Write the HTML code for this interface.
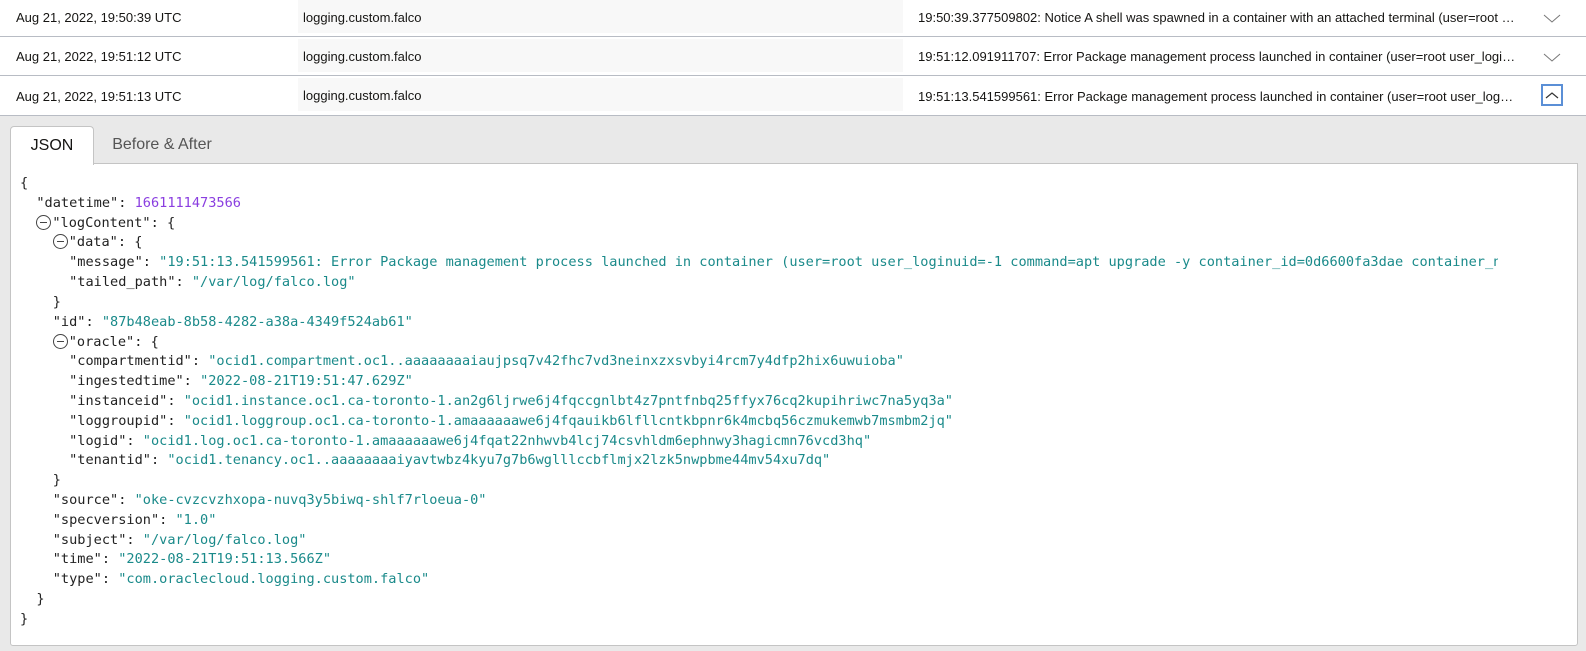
<!DOCTYPE html>
<html style="overflow:hidden;width:1586px;height:651px"><head><style>
html,body{margin:0;padding:0;overflow:hidden}
body{width:1586px;height:651px;position:relative;background:#fff;font-family:"Liberation Sans",sans-serif;font-size:13px;color:#161513;}
.row{position:absolute;left:0;width:1586px;border-bottom:1px solid #b8bcc4;}
.c1{position:absolute;left:16px;top:0;line-height:36px;}
.c2{position:absolute;left:298px;width:605px;top:0;height:33px;background:#f8f8f8;line-height:36px;}
.c2 span{padding-left:5px}
.c3{position:absolute;left:918px;width:598px;top:0;line-height:36px;white-space:nowrap;overflow:hidden;text-overflow:ellipsis;}
.chev{position:absolute;left:1543px;top:13px;width:18px;height:9px;}
.panel{position:absolute;top:116px;left:0;width:1586px;height:535px;background:#e9e9e9;overflow:hidden}
.tab{position:absolute;top:10px;height:38px;box-sizing:border-box;font-size:16px;line-height:38px;text-align:center;}
.t1{left:10px;width:84px;background:#fff;border:1px solid #c4c4c4;border-bottom:none;border-radius:4px 4px 0 0;color:#161513;z-index:2;height:39px}
.t2{left:94px;width:136px;color:#555;}
.box{position:absolute;left:10px;top:47px;width:1568px;height:483px;background:#fff;border:1px solid #c4c4c4;box-sizing:border-box;border-radius:0 0 3px 3px;overflow:hidden}
.code{position:absolute;left:9px;top:10px;width:1478px;overflow:hidden;font-family:"DejaVu Sans Mono","Liberation Mono",monospace;font-size:13.6px;color:#222;}
.code div{height:19.82px;line-height:19.82px;white-space:pre;overflow:hidden}
.s{color:#1a8a8a}.n{color:#8a3ee0}
.tg{display:inline-block;width:15px;height:15px;border:1px solid #444;border-radius:50%;box-sizing:border-box;vertical-align:-3px;position:relative;margin-right:1px}
.tg:after{content:"";position:absolute;left:3px;right:3px;top:6px;height:1px;background:#444}
</style></head><body>
<div class="row" style="top:0;height:36px"><div class="c1">Aug 21, 2022, 19:50:39 UTC</div><div class="c2"><span>logging.custom.falco</span></div><div class="c3">19:50:39.377509802: Notice A shell was spawned in a container with an attached terminal (user=root user_loginuid=0 k8s.ns=default)</div>
<svg class="chev" style="top:14px" viewBox="0 0 18 9"><path d="M1 1l8 7 8-7" fill="none" stroke="#777" stroke-width="1"/></svg></div>
<div class="row" style="top:37px;height:38px"><div class="c1" style="top:2px">Aug 21, 2022, 19:51:12 UTC</div><div class="c2" style="top:2px"><span>logging.custom.falco</span></div><div class="c3" style="top:2px">19:51:12.091911707: Error Package management process launched in container (user=root user_loginuid=-1 command=apt)</div>
<svg class="chev" style="top:16px" viewBox="0 0 18 9"><path d="M1 1l8 7 8-7" fill="none" stroke="#777" stroke-width="1"/></svg></div>
<div class="row" style="top:76px;height:39px"><div class="c1" style="top:3px">Aug 21, 2022, 19:51:13 UTC</div><div class="c2" style="top:2px"><span>logging.custom.falco</span></div><div class="c3" style="top:3px">19:51:13.541599561: Error Package management process launched in container (user=root user_loginuid=-1 command=apt)</div>
<svg style="position:absolute;left:1541px;top:8px;width:22px;height:22px" viewBox="0 0 22 22"><rect x="1" y="1" width="20" height="20" fill="#fff" stroke="#5b8fd6" stroke-width="2"/><path d="M5 14l6-5 6 5" fill="none" stroke="#333" stroke-width="1.2"/></svg></div>
<div class="panel">
<div class="tab t1">JSON</div><div class="tab t2">Before &amp; After</div>
<div class="box"><div class="code">
<div>{</div>
<div>  "datetime": <span class="n">1661111473566</span></div>
<div>  <span class="tg"></span>"logContent": {</div>
<div>    <span class="tg"></span>"data": {</div>
<div>      "message": <span class="s">"19:51:13.541599561: Error Package management process launched in container (user=root user_loginuid=-1 command=apt upgrade -y container_id=0d6600fa3dae container_name=test)"</span></div>
<div>      "tailed_path": <span class="s">"/var/log/falco.log"</span></div>
<div>    }</div>
<div>    "id": <span class="s">"87b48eab-8b58-4282-a38a-4349f524ab61"</span></div>
<div>    <span class="tg"></span>"oracle": {</div>
<div>      "compartmentid": <span class="s">"ocid1.compartment.oc1..aaaaaaaaiaujpsq7v42fhc7vd3neinxzxsvbyi4rcm7y4dfp2hix6uwuioba"</span></div>
<div>      "ingestedtime": <span class="s">"2022-08-21T19:51:47.629Z"</span></div>
<div>      "instanceid": <span class="s">"ocid1.instance.oc1.ca-toronto-1.an2g6ljrwe6j4fqccgnlbt4z7pntfnbq25ffyx76cq2kupihriwc7na5yq3a"</span></div>
<div>      "loggroupid": <span class="s">"ocid1.loggroup.oc1.ca-toronto-1.amaaaaaawe6j4fqauikb6lfllcntkbpnr6k4mcbq56czmukemwb7msmbm2jq"</span></div>
<div>      "logid": <span class="s">"ocid1.log.oc1.ca-toronto-1.amaaaaaawe6j4fqat22nhwvb4lcj74csvhldm6ephnwy3hagicmn76vcd3hq"</span></div>
<div>      "tenantid": <span class="s">"ocid1.tenancy.oc1..aaaaaaaaiyavtwbz4kyu7g7b6wglllccbflmjx2lzk5nwpbme44mv54xu7dq"</span></div>
<div>    }</div>
<div>    "source": <span class="s">"oke-cvzcvzhxopa-nuvq3y5biwq-shlf7rloeua-0"</span></div>
<div>    "specversion": <span class="s">"1.0"</span></div>
<div>    "subject": <span class="s">"/var/log/falco.log"</span></div>
<div>    "time": <span class="s">"2022-08-21T19:51:13.566Z"</span></div>
<div>    "type": <span class="s">"com.oraclecloud.logging.custom.falco"</span></div>
<div>  }</div>
<div>}</div>
</div></div>
</div>
</body></html>
